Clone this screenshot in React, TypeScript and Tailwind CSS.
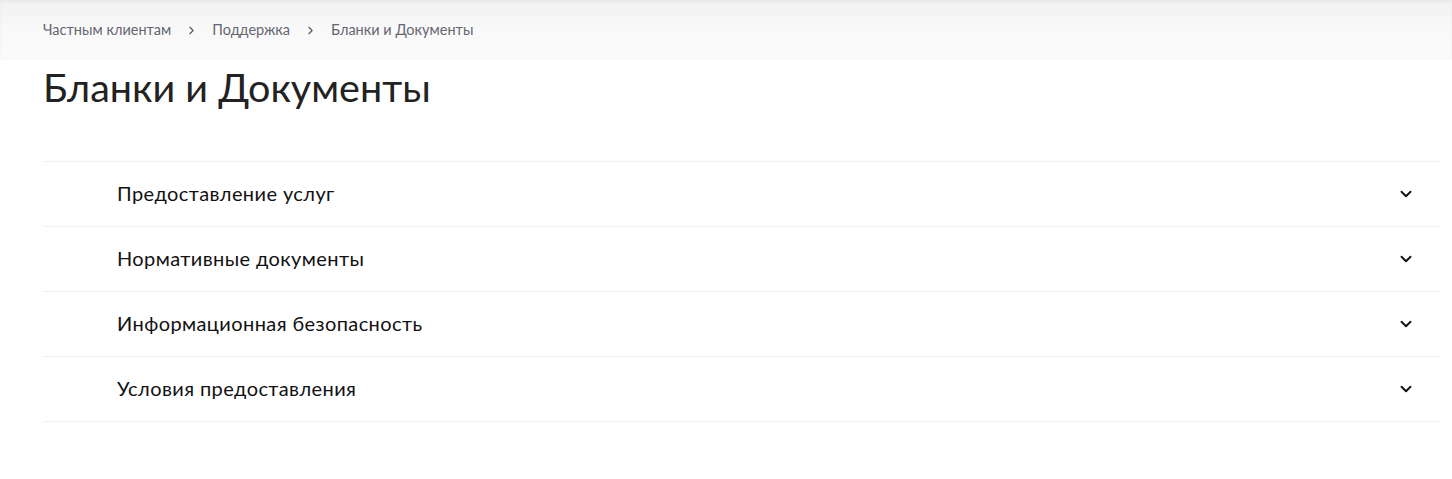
import React from 'react';
import { ChevronDown, ChevronRight } from 'lucide-react';

const crumbs = ['Частным клиентам', 'Поддержка', 'Бланки и Документы'];

const sections = [
  'Предоставление услуг',
  'Нормативные документы',
  'Информационная безопасность',
  'Условия предоставления',
];

const App: React.FC = () => {
  return (
    <div className="min-h-[479px] bg-white" style={{ fontFamily: "Lato, 'Noto Sans', sans-serif" }}>
      {/* Breadcrumbs */}
      <div className="h-[60px] bg-gradient-to-b from-[#f1f1f1] via-[#f9f9f9] to-[#fafafa] shadow-[inset_0_2px_3px_rgba(0,0,0,0.04)]">
        <nav className="flex items-center h-full px-[43px] text-[14.5px] text-[#666670]">
          {crumbs.map((c, i) => (
            <React.Fragment key={c}>
              <span>{c}</span>
              {i < crumbs.length - 1 && (
                <ChevronRight size={13} strokeWidth={2} className="mx-[14px] text-[#555]" />
              )}
            </React.Fragment>
          ))}
        </nav>
      </div>

      {/* Title */}
      <h1 className="px-[43px] pt-[1px] text-[39.5px] leading-[52px] text-[#222] font-normal">
        Бланки и Документы
      </h1>

      {/* Accordion */}
      <div className="mt-[48px] mx-[43px] mr-[11px] border-t border-[#f1f1f1]">
        {sections.map((s) => (
          <button
            key={s}
            className="flex w-full items-center justify-between h-[65px] border-b border-[#f1f1f1] pl-[74px] pr-[26px] text-left"
          >
            <span className="text-[20px] tracking-[0.4px] text-[#111] -mt-[2px]">{s}</span>
            <ChevronDown size={18} strokeWidth={2.5} className="text-[#111]" />
          </button>
        ))}
      </div>
    </div>
  );
};

export default App;
